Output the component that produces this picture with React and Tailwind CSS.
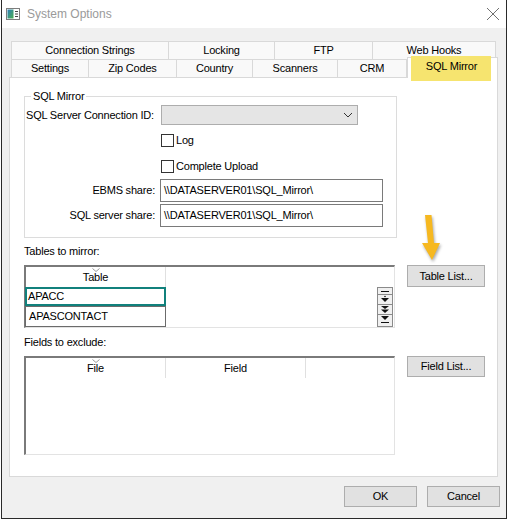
import React from 'react';

const font = { fontFamily: '"Liberation Sans", Arial, sans-serif' };

const Tab = ({ w, children }) => (
  <div
    className={`${w} h-[18px] -ml-[1px] first:ml-0 border border-b-0 border-[#d9d9d9] bg-[#f9f9f9] flex items-center justify-center`}
  >
    {children}
  </div>
);

const SortGlyph = () => (
  <svg width="8" height="4" viewBox="0 0 8 4" className="absolute left-1/2 -translate-x-1/2 top-[1px]">
    <path d="M0.5 0.5 L4 3.5 L7.5 0.5" fill="none" stroke="#9a9a9a" strokeWidth="1" />
  </svg>
);

const Checkbox = ({ label }) => (
  <div className="flex items-center pl-[136px] h-[13px]">
    <div className="w-[13px] h-[13px] border border-[#333] bg-white" />
    <span className="ml-[2px]">{label}</span>
  </div>
);

const ShareRow = ({ label, value }) => (
  <div className="flex items-center">
    <div className="w-[135px] text-right pr-[5px]">{label}</div>
    <div className="w-[223px] h-[23px] border border-[#7a7a7a] bg-white px-[3px] flex items-center">
      {value}
    </div>
  </div>
);

const Button = ({ w, h, children }) => (
  <div className={`${w} ${h} border border-[#adadad] bg-[#e1e1e1] flex items-center justify-center`}>
    {children}
  </div>
);

const Navigator = () => (
  <svg width="16" height="40" viewBox="0 0 16 40" className="absolute right-[1px] top-[20px]">
    <rect x="0.5" y="0.5" width="15" height="39" fill="#f0f0f0" stroke="#8a8a8a" />
    <line x1="0" y1="7.5" x2="16" y2="7.5" stroke="#8a8a8a" />
    <line x1="0" y1="17.5" x2="16" y2="17.5" stroke="#8a8a8a" />
    <line x1="0" y1="27.5" x2="16" y2="27.5" stroke="#8a8a8a" />
    <line x1="4" y1="4.5" x2="12" y2="4.5" stroke="#111" />
    <circle cx="8" cy="9.5" r="0.8" fill="#111" />
    <path d="M4 11 H12 L8 15 Z" fill="#111" />
    <path d="M4 19 H12 L8 22 Z" fill="#111" />
    <path d="M4 22.5 H12 L8 26 Z" fill="#111" />
    <path d="M4 29 H12 L8 33 Z" fill="#111" />
    <line x1="4" y1="35.5" x2="12" y2="35.5" stroke="#111" />
  </svg>
);

export default function App() {
  return (
    <div className="w-[511px] h-[520px] bg-white relative text-[11px] tracking-[-0.2px] text-black" style={font}>
      <div className="ml-[1px] w-[506px] h-[519px] border-l border-r border-b border-[#2a2a2a] bg-[#f0f0f0] flex flex-col">
        {/* title bar */}
        <div className="h-[28px] bg-white flex items-center pl-[4px] pr-[4px]">
          <svg width="14" height="12" viewBox="0 0 14 12">
            <rect x="0.5" y="0.5" width="13" height="11" fill="#fff" stroke="#7d7d7d" />
            <defs>
              <linearGradient id="ig" x1="0" y1="0" x2="1" y2="1">
                <stop offset="0" stopColor="#2e7fb8" />
                <stop offset="1" stopColor="#4caf50" />
              </linearGradient>
            </defs>
            <rect x="1.5" y="1.5" width="6" height="9" fill="url(#ig)" />
            <line x1="9" y1="3.5" x2="12" y2="3.5" stroke="#444" />
            <line x1="9" y1="6" x2="12" y2="6" stroke="#444" />
            <line x1="9" y1="8.5" x2="12" y2="8.5" stroke="#444" />
          </svg>
          <span className="ml-[7px] text-[12px] tracking-normal text-[#9a9a9a]">System Options</span>
          <svg width="14" height="14" viewBox="0 0 14 14" className="ml-auto mr-[2px]">
            <path d="M1 1 L13 13 M13 1 L1 13" stroke="#707070" strokeWidth="1" />
          </svg>
        </div>

        {/* body */}
        <div className="flex-1 pt-[13px] pl-[7px] flex flex-col">
          {/* tabs */}
          <div className="h-[36px] w-[489px] flex flex-col">
            <div className="flex ml-[2px]">
              <Tab w="w-[158px]">Connection Strings</Tab>
              <Tab w="w-[107px]">Locking</Tab>
              <Tab w="w-[99px]">FTP</Tab>
              <Tab w="w-[124px]">Web Hooks</Tab>
            </div>
            <div className="flex ml-[2px] h-[18px] items-end">
              <Tab w="w-[78px]">Settings</Tab>
              <Tab w="w-[89px]">Zip Codes</Tab>
              <Tab w="w-[77px]">Country</Tab>
              <Tab w="w-[86px]">Scanners</Tab>
              <Tab w="w-[70px]">CRM</Tab>
              <div className="relative z-10 w-[91px] h-[21px] -mb-[1px] border border-b-0 border-[#d9d9d9] bg-white flex items-center justify-center">
                <div className="absolute left-[3px] -top-[2px] w-[80px] h-[25px] bg-[#f6e46f]" />
                <span className="relative -mt-[3px] pr-[2px]">SQL Mirror</span>
              </div>
            </div>
          </div>

          {/* panel */}
          <div className="w-[489px] h-[400px] border border-[#d9d9d9] bg-white pl-[14px] pt-[18px] flex flex-col">
            <div className="relative w-[373px] h-[142px] border border-[#dcdcdc] pt-[8px]">
              <span className="absolute left-[6px] -top-[8px] px-[2px] bg-white leading-[14px]">SQL Mirror</span>
              <div className="flex items-center h-[20px]">
                <div className="w-[136px] pl-[1px]">SQL Server Connection ID:</div>
                <div className="w-[197px] h-[20px] border border-[#adadad] bg-[#e5e5e5] flex items-center justify-end pr-[4px]">
                  <svg width="10" height="6" viewBox="0 0 10 6">
                    <path d="M1 1 L5 5 L9 1" fill="none" stroke="#333" strokeWidth="1" />
                  </svg>
                </div>
              </div>
              <div className="mt-[9px]">
                <Checkbox label="Log" />
              </div>
              <div className="mt-[13px]">
                <Checkbox label="Complete Upload" />
              </div>
              <div className="mt-[6px]">
                <ShareRow label="EBMS share:" value="\\DATASERVER01\SQL_Mirror\" />
              </div>
              <div className="mt-[2px]">
                <ShareRow label="SQL server share:" value="\\DATASERVER01\SQL_Mirror\" />
              </div>
            </div>

            <div className="mt-[6px] leading-[14px]">Tables to mirror:</div>
            <div className="mt-[7px] flex items-start">
              <div className="relative w-[371px] h-[63px] border-t-2 border-l-2 border-t-[#7a7a7a] border-l-[#7a7a7a] border-r border-b border-r-[#e3e3e3] border-b-[#e3e3e3]">
                <div className="relative w-[140px] h-[20px] border-r border-[#e0e0e0] flex items-center justify-center">
                  <SortGlyph />
                  <span className="mt-[1px]">Table</span>
                </div>
                <div className="w-[141px] -ml-[1px] h-[19px] border-2 border-[#11817c] flex items-center pl-[1px]">APACC</div>
                <div className="w-[141px] -ml-[1px] h-[21px] border border-[#6b6b6b] flex items-center pl-[3px]">APASCONTACT</div>
                <Navigator />
              </div>
              <div className="ml-[12px]">
                <Button w="w-[78px]" h="h-[22px]">Table List...</Button>
              </div>
            </div>

            <div className="mt-[7px] leading-[14px]">Fields to exclude:</div>
            <div className="mt-[7px] flex items-start">
              <div className="w-[371px] h-[99px] border-t-2 border-l-2 border-t-[#7a7a7a] border-l-[#7a7a7a] border-r border-b border-r-[#e3e3e3] border-b-[#e3e3e3]">
                <div className="flex">
                  <div className="relative w-[140px] h-[20px] border-r border-[#e0e0e0] flex items-center justify-center">
                    <SortGlyph />
                    <span className="mt-[1px]">File</span>
                  </div>
                  <div className="w-[140px] h-[20px] border-r border-[#e0e0e0] flex items-center justify-center">
                    <span className="mt-[1px]">Field</span>
                  </div>
                </div>
              </div>
              <div className="ml-[12px]">
                <Button w="w-[78px]" h="h-[21px]">Field List...</Button>
              </div>
            </div>
          </div>

          {/* dialog buttons */}
          <div className="mt-[9px] flex justify-end gap-[10px] pr-[6px]">
            <Button w="w-[73px]" h="h-[21px]">OK</Button>
            <Button w="w-[73px]" h="h-[21px]">Cancel</Button>
          </div>
        </div>
      </div>

      {/* annotation arrow */}
      <svg
        width="24"
        height="50"
        viewBox="0 0 24 50"
        className="absolute left-[419px] top-[213px]"
        style={{ filter: 'drop-shadow(1px 2px 1.5px rgba(0,0,0,0.35))' }}
      >
        <path d="M6 2 L12.5 2 L15 30 L21 30 L13 47 L3 30 L9 30 Z" fill="#f6b820" />
      </svg>
    </div>
  );
}
